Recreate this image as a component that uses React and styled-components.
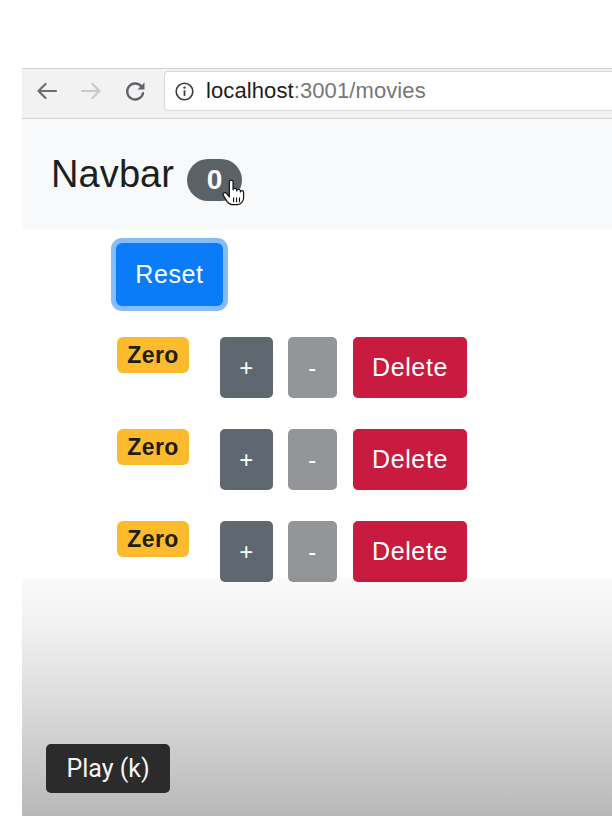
import React from "react";
import styled, { createGlobalStyle } from "styled-components";

const GlobalStyle = createGlobalStyle`
  html, body {
    margin: 0;
    padding: 0;
    background: #ffffff;
  }
  body {
    font-family: "Liberation Sans", Arial, sans-serif;
    overflow: hidden;
  }
`;

const counters = [
  { id: 1, value: 0 },
  { id: 2, value: 0 },
  { id: 3, value: 0 },
];

const BackIcon = ({ color }) => (
  <svg width="22" height="18" viewBox="0 0 22 18" fill="none">
    <path d="M20 9H2.5M9.5 2L2.5 9l7 7" stroke={color} strokeWidth="2.2" strokeLinecap="round" strokeLinejoin="round" />
  </svg>
);

const ForwardIcon = ({ color }) => (
  <svg width="22" height="18" viewBox="0 0 22 18" fill="none">
    <path d="M2 9h17.5M12.5 2l7 7-7 7" stroke={color} strokeWidth="2.2" strokeLinecap="round" strokeLinejoin="round" />
  </svg>
);

const ReloadIcon = () => (
  <svg width="22" height="22" viewBox="0 0 22 22" fill="none">
    <path d="M17.2 6.2A8 8 0 1 0 19 13.2" stroke="#5f6368" strokeWidth="2.3" strokeLinecap="round" />
    <path d="M20.5 2.5v7h-7z" fill="#5f6368" />
  </svg>
);

const InfoIcon = () => (
  <svg width="19" height="19" viewBox="0 0 19 19" fill="none">
    <circle cx="9.5" cy="9.5" r="8.3" stroke="#3c3c3c" strokeWidth="1.6" />
    <circle cx="9.5" cy="5.6" r="1.2" fill="#3c3c3c" />
    <path d="M9.5 8.3v5.6" stroke="#3c3c3c" strokeWidth="1.8" />
  </svg>
);

const HandCursor = () => (
  <svg width="23" height="28" viewBox="0 0 25 29" fill="none">
    <path
      d="M8 2.2C8 1.2 8.9 0.6 10 0.6s2 0.6 2 1.6V11c0-1 .9-1.5 2-1.5s2 .6 2 1.5v1.2c0-1 .9-1.5 2-1.5s2 .6 2 1.5v1.2c0-.9.8-1.4 1.8-1.4s1.7.7 1.7 1.7V19.5c0 4-2.6 7.6-6.6 7.6h-6c-2.5 0-4-1.4-5.5-3.5L1.6 17.4c-.7-1-.5-2.3.5-2.9 1-.6 2.2-.2 3 .8L8 18.8V2.2z"
      fill="#ffffff"
      stroke="#111"
      strokeWidth="1.3"
      strokeLinejoin="round"
    />
    <path d="M12.6 19.5v5M15.8 19.5v5M19 19.5v5" stroke="#111" strokeWidth="1.2" />
  </svg>
);

export default function App() {
  return (
    <Page>
      <GlobalStyle />
      <CornerArc />
      <TopGap />
      <Browser>
        <Toolbar>
          <NavIcons>
            <BackIcon color="#6b6e72" />
            <ForwardIcon color="#c9cacc" />
            <ReloadIcon />
          </NavIcons>
          <AddressField>
            <InfoIcon />
            <Url>
              <Host>localhost</Host>
              <PathPart>:3001/movies</PathPart>
            </Url>
          </AddressField>
        </Toolbar>

        <Navbar>
          <Brand>Navbar</Brand>
          <CountPill>
            0
            <CursorSpot>
              <HandCursor />
            </CursorSpot>
          </CountPill>
        </Navbar>

        <Content>
          <ResetButton>Reset</ResetButton>
          <CounterList>
            {counters.map((c) => (
              <CounterRow key={c.id}>
                <ZeroBadge>Zero</ZeroBadge>
                <ActionButton $variant="plus">+</ActionButton>
                <ActionButton $variant="minus">-</ActionButton>
                <ActionButton $variant="delete">Delete</ActionButton>
              </CounterRow>
            ))}
          </CounterList>
        </Content>

        <Shade />
      </Browser>

      <PlayTip>Play (k)</PlayTip>
    </Page>
  );
}

const Page = styled.div`
  position: relative;
  width: 612px;
  height: 816px;
  overflow: hidden;
  background: #ffffff;
  display: flex;
  flex-direction: column;
`;

const CornerArc = styled.div`
  position: absolute;
  left: 596px;
  top: -86px;
  width: 90px;
  height: 90px;
  border-radius: 50%;
  border: 1.5px solid #c9c9c9;
`;

const TopGap = styled.div`
  height: 68px;
  flex-shrink: 0;
`;

const Browser = styled.div`
  position: relative;
  margin-left: 22px;
  flex: 1;
  display: flex;
  flex-direction: column;
  background: #ffffff;
`;

const Toolbar = styled.div`
  display: flex;
  align-items: flex-start;
  height: 48px;
  padding: 1px 0 0 14px;
  box-sizing: content-box;
  background: #f2f2f2;
  border-top: 1px solid #d2d2d2;
  border-bottom: 1px solid #d4d4d4;
`;

const NavIcons = styled.div`
  display: flex;
  align-items: center;
  gap: 22px;
  height: 40px;
  margin-top: 1px;
`;

const AddressField = styled.div`
  flex: 1;
  height: 40px;
  margin-left: 18px;
  margin-top: 1px;
  display: flex;
  align-items: center;
  gap: 12px;
  padding-left: 10px;
  background: #ffffff;
  border: 1px solid #d8d8d8;
  border-right: none;
  border-radius: 4px 0 0 4px;
  box-sizing: border-box;
`;

const Url = styled.div`
  font-size: 22px;
  letter-spacing: 0.1px;
  white-space: nowrap;
`;

const Host = styled.span`
  color: #1d1d1d;
`;

const PathPart = styled.span`
  color: #777777;
`;

const Navbar = styled.div`
  height: 111px;
  display: flex;
  align-items: center;
  gap: 13px;
  padding-left: 29px;
  background: #f8f9fa;
`;

const Brand = styled.span`
  font-size: 38px;
  color: #1c1f22;
  letter-spacing: 0.1px;
`;

const CountPill = styled.span`
  position: relative;
  width: 55px;
  height: 42px;
  margin-top: 10px;
  display: flex;
  align-items: center;
  justify-content: center;
  border-radius: 21px;
  background: #5a6268;
  color: #ffffff;
  font-size: 28px;
  font-weight: 700;
`;

const CursorSpot = styled.span`
  position: absolute;
  left: 35px;
  top: 20px;
  line-height: 0;
`;

const Content = styled.div`
  padding: 13px 0 0 94px;
`;

const ResetButton = styled.button`
  width: 107px;
  height: 63px;
  border: none;
  border-radius: 6px;
  background: #0a7cfa;
  color: #ffffff;
  font-family: "Liberation Sans", Arial, sans-serif;
  font-size: 25px;
  letter-spacing: 0.6px;
  box-shadow: 0 0 0 5px #86bcf9;
  padding: 0;
`;

const CounterList = styled.div`
  display: flex;
  flex-direction: column;
  gap: 31px;
  margin-top: 31px;
  padding-left: 1px;
`;

const CounterRow = styled.div`
  display: flex;
  align-items: flex-start;
  height: 61px;
`;

const ZeroBadge = styled.span`
  width: 72px;
  height: 36px;
  display: flex;
  align-items: center;
  justify-content: center;
  border-radius: 6px;
  background: #fbbb2d;
  color: #221d12;
  font-size: 23px;
  font-weight: 700;
  letter-spacing: 0.4px;
  margin-right: 31px;
`;

const variants = {
  plus: { bg: "#5f6870", width: "53px", gap: "15px", size: "24px" },
  minus: { bg: "#939599", width: "49px", gap: "16px", size: "24px" },
  delete: { bg: "#c91a3f", width: "114px", gap: "0", size: "25px" },
};

const ActionButton = styled.button`
  width: ${(p) => variants[p.$variant].width};
  height: 61px;
  margin-right: ${(p) => variants[p.$variant].gap};
  border: none;
  border-radius: 5px;
  padding: 0;
  background: ${(p) => variants[p.$variant].bg};
  color: #ffffff;
  font-family: "Liberation Sans", Arial, sans-serif;
  font-size: ${(p) => variants[p.$variant].size};
  letter-spacing: 0.6px;
`;

const Shade = styled.div`
  position: absolute;
  left: 0;
  right: 0;
  bottom: 0;
  height: 238px;
  pointer-events: none;
  background: linear-gradient(
    to bottom,
    rgba(0, 0, 0, 0.02) 0%,
    rgba(0, 0, 0, 0.05) 18%,
    rgba(0, 0, 0, 0.15) 55%,
    rgba(0, 0, 0, 0.28) 100%
  );
`;

const PlayTip = styled.div`
  position: absolute;
  left: 46px;
  bottom: 23px;
  width: 124px;
  height: 49px;
  display: flex;
  align-items: center;
  justify-content: center;
  border-radius: 5px;
  background: #2b2b2b;
  color: #f4f4f4;
  font-family: Roboto, "Liberation Sans", sans-serif;
  font-size: 25px;
`;
